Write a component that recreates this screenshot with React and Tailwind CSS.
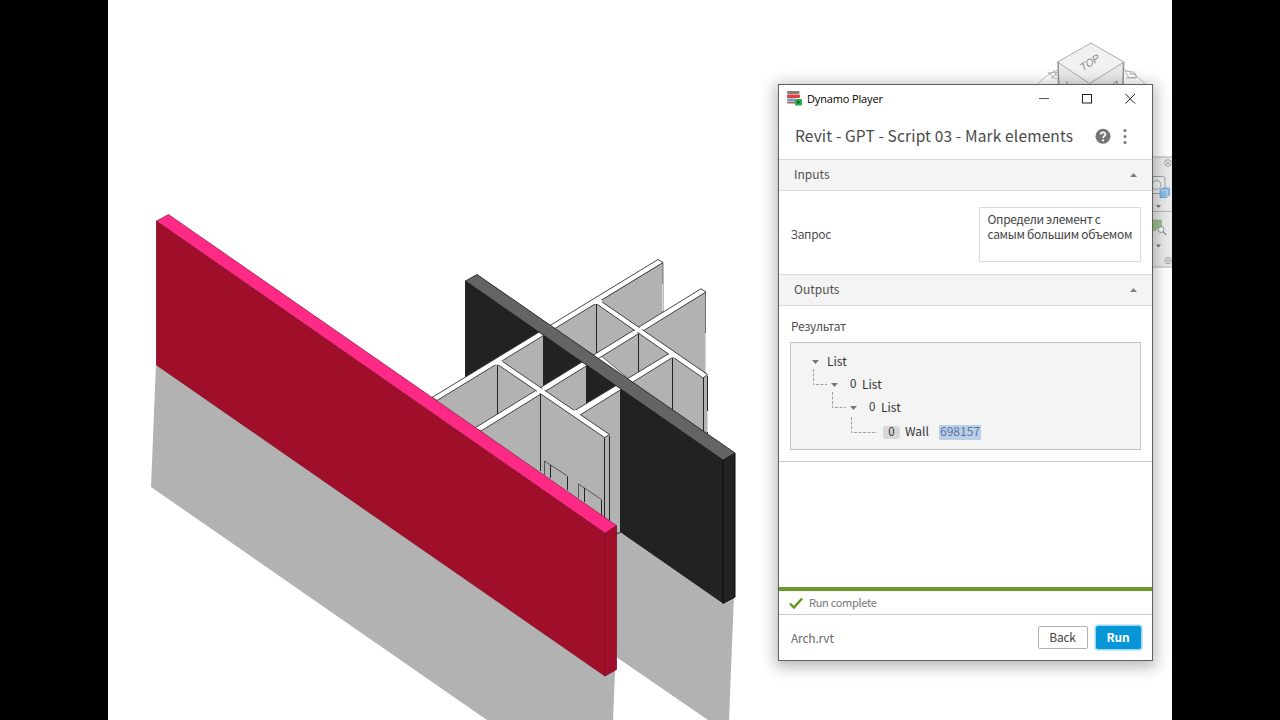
import React, { useState } from 'react';

const ViewCube = () => (
  <g fill="#f1f1f1" stroke="#9a9a9a" strokeWidth="0.8">
    <path d="M1038 84C1043 78 1050 73 1060 69M1123 69C1133 73 1140 78 1145 84" fill="none" stroke="#b5b5b5" />
    <path d="M1048 73l9-1-3 5-6-4M1053 70l4 6M1051 77l6 2M1125 71l9 1 3 5-8 1-4-7M1129 74l7 0M1126 78l10 0" fill="none" stroke="#a8a8a8" />
    <path d="M1058 62v24h65V62z" fill="#e9e9e9" />
    <path d="M1057.5 62l33.5-19 33 19-34.5 21.5z" />
    <path d="M1058 62l1 23M1124 62l-1 23M1067 81v4M1113 84l4-3v4" fill="none" stroke="#777" />
    <text
      x="1090"
      y="66"
      textAnchor="middle"
      fontFamily="Liberation Sans"
      fontSize="10.5"
      fill="#8a8a8a"
      stroke="none"
      transform="rotate(-32 1090 62) skewX(-12) translate(13 0)"
    >
      TOP
    </text>
  </g>
);

const NavigationBar = () => (
  <g>
    <rect x="1140" y="157" width="40" height="110" fill="#ebebeb" stroke="#b0b0b0" />
    <path d="M1150 211.5h22" stroke="#b9b2bb" />
    <g fill="none" stroke="#a3a3a3">
      <circle cx="1168" cy="163" r="3.3" />
      <path d="M1166.5 161.5l3 3M1169.5 161.5l-3 3" />
      <circle cx="1168" cy="260.5" r="3.3" />
      <circle cx="1168" cy="260.5" r="1.3" />
    </g>
    <rect x="1150" y="176.5" width="15" height="17" rx="2.5" fill="#f1f1f1" stroke="#9aa0a6" />
    <circle cx="1156.5" cy="185" r="4.5" fill="#f7f7f7" stroke="#9aa0a6" />
    <path d="M1160 190l2.5-2h7v7l-2.5 2.5h-7z" fill="#8bbdea" stroke="#5f95c9" strokeWidth="0.7" />
    <path d="M1160.5 190.5h6.5v7M1167 190.5l2-2" fill="none" stroke="#d5e9fb" strokeWidth="0.7" />
    <path d="M1150 220h11.5v7.5h-4l-2 3h-6z" fill="#9dc48c" stroke="#85aa77" strokeWidth="0.5" />
    <circle cx="1161" cy="229.5" r="3" fill="#f6f6f6" stroke="#8e979c" />
    <path d="M1163.2 231.7l3 3.3" stroke="#8e979c" strokeWidth="1.4" />
    <path d="M1156 205h5l-2.5 3zM1156 244.5h5l-2.5 3z" fill="#777" />
  </g>
);

const ModelView = () => (
  <svg className="block h-[720px] w-[1064px]" viewBox="108 0 1064 720">
    {/* wall shadows */}
    <g fill="#b2b2b2">
      <path d="M156 364L151 487L487 720H613L615.5 660z" />
      <path d="M610 530L617 657.5L708 720H729L734 595L640 530z" />
    </g>

    {/* rooms behind the dark wall */}
    <g fill="#b2b2b2" stroke="#444" strokeWidth="0.7">
      <path d="M600 301L663 262.5V313L638 330z" />
      <path d="M638 332L705.5 292V375z" />
      <path d="M550 328L597 303L640 330L597 357z" />
      <path d="M600 355L638 332L672 354L630 380z" />
      <path d="M625 383L672 356L707.5 376V436L690 440z" />
    </g>
    <path d="M596.5 304V354M638.5 333V372M672.5 357V413M703.5 377V431M707.5 376V433" stroke="#222" />
    <path d="M705.5 333V372M662.5 284V311M707.5 411V432" stroke="#d8d8d8" />

    {/* dark wall */}
    <path d="M465.5 281L723 460V603L465.5 424z" fill="#222" stroke="#111" strokeWidth="0.8" />
    <path d="M723 460L735 453V597L723 603.5z" fill="#222" stroke="#0b0b0b" />

    {/* rooms in front of the dark wall */}
    <g fill="#b2b2b2">
      <path d="M434 400L497 363L540 391L478 430z" />
      <path d="M500 361L543 334V388L540 390z" />
      <path d="M543 392L586 365V406L575 413z" />
      <path d="M576 415L620 390V534H600z" />
      <path d="M474 430L541 392L609.5 436V534H600z" />
    </g>
    <path
      d="M497.5 364V414M543.5 335V385M586.5 367V404M540.5 394V471M604.5 438V518M609.5 436V521M617 533.5L620.5 532.5"
      fill="none"
      stroke="#222"
    />
    <path d="M544.5 475V461L567.5 476V490M578.5 498V484L601.5 499.5V515" fill="none" stroke="#555" />
    <path d="M550.5 465V478M567.5 477V490M584.5 488V502M601.5 500V515" stroke="#222" />

    {/* wall tops */}
    <g fill="#fff" stroke="#333" strokeWidth="0.9">
      <path d="M658 259.5L663 262.5L437 400.5L432 397.5z" />
      <path d="M701 288.8L706 292L481 431L474 428.5z" />
      <path d="M669 353.5L674 356.5L580 415L574 411z" />
      <path d="M600 300.5L707.5 374.5L703 378L596 303.5z" />
      <path d="M501 360.5L609.5 434.5L604.5 437.5L497 364z" />
    </g>
    {/* joints */}
    <path
      d="M594.5 301.5L602 302.5M635 330L642 330M669 355L676 355.5M494.5 362.5L502.5 362.5M537 391L544.5 391M573.5 412.5L580 412.5"
      stroke="#fff"
      strokeWidth="4.4"
    />

    <path d="M465.5 281L477 274.5L735 453L723 460z" fill="#646464" stroke="#222" strokeWidth="0.9" />

    {/* selected wall */}
    <path d="M156.5 221L605 533V676L156.5 365z" fill="#a00f2a" stroke="#8a0d25" strokeWidth="0.8" />
    <path d="M605 533L616.5 525.5V669.5L605 676z" fill="#a00f2a" stroke="#860c23" strokeWidth="0.8" />
    <path d="M156.5 221L168.5 214.5L616.5 525.5L605 533z" fill="#ff2a85" stroke="#7c1035" strokeWidth="0.6" />

    <ViewCube />
    <NavigationBar />
  </svg>
);

const TitleBar = () => (
  <div className="flex h-7 items-center pl-2 pr-4 font-['Open_Sans',sans-serif] text-[11px] tracking-[-0.15px] text-black">
    <svg className="mr-1 h-4 w-4" viewBox="0 0 16 16">
      <rect x="0" y="0" width="12.5" height="3" rx="1" fill="#8a7d78" />
      <rect x="0" y="3.5" width="13" height="3.5" rx="1" fill="#d9413f" />
      <rect x="0" y="7.5" width="9" height="2.5" rx="1" fill="#6f9fc4" />
      <rect x="0" y="10.5" width="9" height="2" rx="1" fill="#a5656a" />
      <rect x="8" y="8" width="7" height="6.5" rx="1" fill="#20b14c" />
      <path d="M10.5 9.5l2.5 1.7-2.5 1.8z" fill="#07401b" />
    </svg>
    <span>Dynamo Player</span>
    <svg className="ml-auto h-3 w-[98px]" viewBox="0 0 98 12" fill="none" stroke="#222">
      <path d="M1 5.5h10" stroke="#555" />
      <rect x="44.5" y="1.5" width="9" height="8.5" />
      <path d="M87.5 1l9.5 9.5M97 1l-9.5 9.5" />
    </svg>
  </div>
);

const SectionHeader = ({ title, onClick }) => (
  <button
    className="flex h-8 w-full items-center justify-between border-y border-[#d9d9d9] bg-[#f4f4f4] px-[15px]"
    onClick={onClick}
  >
    <span className="pb-0.5">{title}</span>
    <svg className="h-1 w-[7px]" viewBox="0 0 7 4">
      <path d="M0 4h7L3.5 0z" fill="#808080" />
    </svg>
  </button>
);

const Caret = () => (
  <svg className="h-1 w-[7px]" viewBox="0 0 7 4">
    <path d="M0 0h7L3.5 4z" fill="#777" />
  </svg>
);

const Branch = ({ wide }) => (
  <svg className={wide ? 'h-4 w-[26px]' : 'h-4 w-[14px]'} fill="none" stroke="#a0a0a0" strokeDasharray="3 1.5">
    <path d={wide ? 'M.5 0V15.5H26' : 'M.5 0V15.5H14'} />
  </svg>
);

const ResultTree = () => (
  <div className="-ml-px mt-[7px] h-[108px] border border-[#c4c4c4] bg-[#f4f4f4] pt-[7px] text-[#333]">
    <div className="flex h-[23px] items-center pl-[21px]">
      <Caret />
      <span className="ml-2 pb-0.5">List</span>
    </div>
    <div className="flex h-[23px] items-center pl-[22px]">
      <div className="-mt-[15px]"><Branch /></div>
      <div className="ml-1"><Caret /></div>
      <span className="ml-[12px] w-[7px] pb-0.5 text-[11.5px]">0</span>
      <span className="ml-[5px] pb-0.5">List</span>
    </div>
    <div className="flex h-[23px] items-center pl-[41px]">
      <div className="-mt-[15px]"><Branch /></div>
      <div className="ml-1"><Caret /></div>
      <span className="ml-[12px] w-[7px] pb-0.5 text-[11.5px]">0</span>
      <span className="ml-[5px] pb-0.5">List</span>
    </div>
    <div className="flex h-[26px] items-center pl-[60px]">
      <div className="-mt-[15px]"><Branch wide /></div>
      <span className="ml-[6px] flex h-[13px] w-[17px] items-center justify-center rounded-[3px] bg-[#d8d8d8] text-[11.5px]">0</span>
      <span className="ml-[5px] w-[34px] pb-0.5">Wall</span>
      <span className="flex h-[15px] w-[42px] items-center justify-center rounded-[1px] bg-[#bccfe8] pb-0.5 text-[#5877a3]">698157</span>
    </div>
  </div>
);

const DynamoPlayer = () => {
  const [query, setQuery] = useState('Определи элемент с самым большим объемом');
  const [inputsOpen, setInputsOpen] = useState(true);
  const [outputsOpen, setOutputsOpen] = useState(true);

  return (
    <div className="absolute left-[670px] top-[84px] flex h-[577px] w-[375px] flex-col border border-[#606060] bg-white font-['Noto_Sans_CJK_SC','Noto_Sans',sans-serif] text-xs text-[#505050] shadow-[0_3px_14px_3px_rgba(0,0,0,0.28)]">
      <TitleBar />

      <div className="flex h-[46px] items-center pl-4 pr-[25px] text-[15.5px] tracking-[0.15px] text-[#4a4a4a]">
        <span className="-mt-0.5 whitespace-nowrap">Revit - GPT - Script 03 - Mark elements</span>
        <svg className="ml-auto h-4 w-4 shrink-0" viewBox="0 0 16 16">
          <circle cx="8" cy="8.3" r="7.5" fill="#757575" />
          <path d="M5.7 6.6C5.7 3.5 10.4 3.6 10.4 6.4C10.4 8.2 8.1 8.2 8.1 10" fill="none" stroke="#fff" strokeWidth="1.7" />
          <circle cx="8.1" cy="12.3" r="1.1" fill="#fff" />
        </svg>
        <svg className="ml-3 h-4 w-1 shrink-0" viewBox="0 0 4 16" fill="#757575">
          <circle cx="2" cy="2.5" r="1.5" />
          <circle cx="2" cy="8.5" r="1.5" />
          <circle cx="2" cy="14.5" r="1.5" />
        </svg>
      </div>

      <SectionHeader title="Inputs" onClick={() => setInputsOpen(!inputsOpen)} />
      {inputsOpen && (
        <div className="flex h-[83px] items-center justify-between pl-[11.5px] pr-[11px] pt-[3px]">
          <label className="tracking-[-0.3px]">Запрос</label>
          <textarea
            className="h-[55px] w-[162px] resize-none overflow-hidden border border-[#dcdcdc] pb-1 pl-[7.5px] pr-1 pt-[3px] leading-[15px] tracking-[-0.33px] text-[#444] outline-none"
            value={query}
            onChange={(e) => setQuery(e.target.value)}
          />
        </div>
      )}

      <SectionHeader title="Outputs" onClick={() => setOutputsOpen(!outputsOpen)} />
      {outputsOpen && (
        <div className="h-[156px] border-b border-[#cccccc] pl-3 pr-[11px] pt-3">
          <p className="pb-px leading-4 tracking-[-0.3px]">Результат</p>
          <ResultTree />
        </div>
      )}

      <div className="flex-1" />

      {/* run status */}
      <div className="h-1 bg-[#6a9a2d]" />
      <div className="flex h-6 items-center border-b border-[#cccccc] pl-[10px] text-[11px] tracking-[-0.3px] text-[#757575]">
        <svg className="mr-[6px] h-3 w-[14px]" viewBox="0 0 14 12" fill="none" stroke="#5f9424" strokeWidth="2.4">
          <path d="M1 6.5l4 4 8-9" />
        </svg>
        Run complete
      </div>
      <div className="flex h-[45px] items-center pl-3 pr-[11.5px]">
        <span className="mr-auto tracking-[-0.2px] text-[#6a6a6a]">Arch.rvt</span>
        <button className="h-[23px] w-[50px] rounded-[2px] border border-[#b0b0b0] pb-0.5 tracking-[-0.2px] text-[#444]">Back</button>
        <button className="ml-2 h-[23px] w-[45px] rounded-[2px] bg-[#0696d7] pb-0.5 font-bold tracking-[-0.2px] text-white shadow-[0_0_0_1.5px_#9ad8f3]">
          Run
        </button>
      </div>
    </div>
  );
};

const App = () => (
  <div className="flex h-screen w-screen justify-center overflow-hidden bg-black">
    <main className="relative h-[720px] w-[1064px] overflow-hidden bg-white">
      <ModelView />
      <DynamoPlayer />
    </main>
  </div>
);

export default App;
